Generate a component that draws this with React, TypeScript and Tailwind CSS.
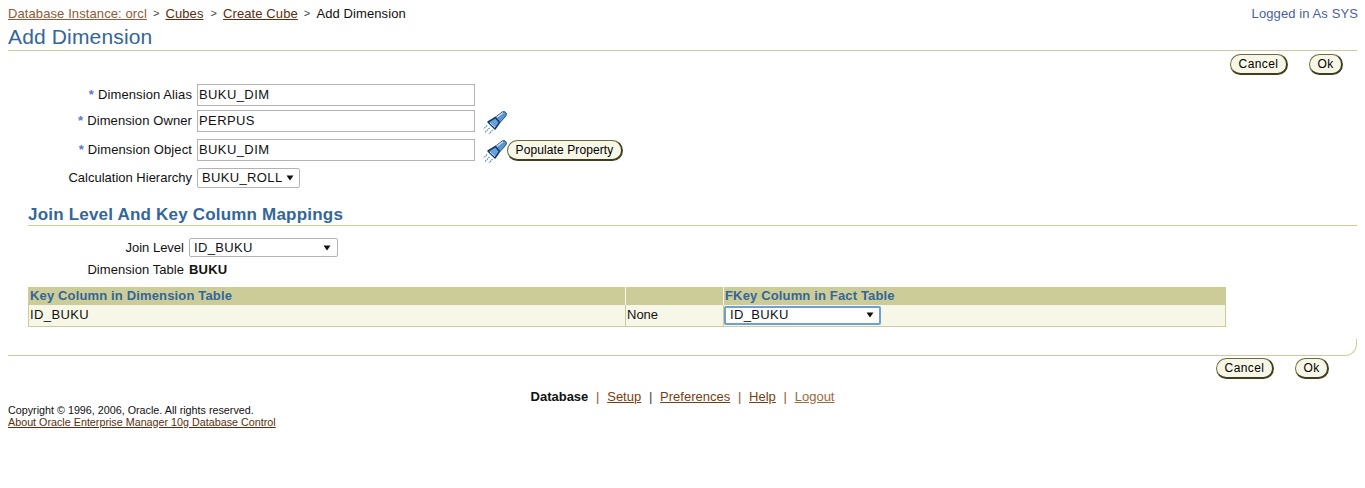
const font = "font-['Liberation_Sans',Arial,sans-serif]";

function Torch() {
  return (
    <svg width="24" height="24" viewBox="0 0 24 24" className="shrink-0">
      <path d="M12 6.5 L19.5 0.8 Q22 0 23.2 2 Q23.8 4 22.5 5.5 L16.5 12 Z" fill="#5a95cc" stroke="#1f4f86" strokeWidth="1" />
      <path d="M13.5 6.5 L20 1.8" stroke="#d2e4f4" strokeWidth="1.4" />
      <path d="M12.5 6.5 L16.5 11.5 L12 18 L5 11 Z" fill="#6aa0d2" stroke="#0f3c78" strokeWidth="1.5" strokeLinejoin="round" />
      <path d="M7 12 L12 16.5" stroke="#cfe2f2" strokeWidth="1" />
      <path d="M4 14.5 L0.5 18 M6.5 17 L2 21.5 M9.5 19 L6 23" stroke="#4a82b8" strokeWidth="1.1" strokeDasharray="1.4 0.9" />
    </svg>
  );
}

function Pill({ label, className = "" }: { label: string; className?: string }) {
  return (
    <button className={`h-[21px] shrink-0 rounded-full border border-[#6b6b3f] border-r-2 border-b-2 border-r-[#3f3f1f] border-b-[#3f3f1f] bg-[#f7f7e7] text-[12px] leading-none text-black ${className}`}>
      {label}
    </button>
  );
}

function Arrow() {
  return (
    <svg width="8" height="6" viewBox="0 0 8 6" className="shrink-0">
      <path d="M0.5 0.5 H7.5 L4 5.5 Z" fill="#111" />
    </svg>
  );
}

function FakeSelect({ value, className }: { value: string; className: string }) {
  return (
    <div className={`flex items-center justify-between rounded-[2px] bg-white text-[13px] tracking-[0.35px] text-[#111] ${className}`}>
      <span>{value}</span>
      <Arrow />
    </div>
  );
}

function Field({ label, value, star, top, icon }: { label: string; value: string; star?: boolean; top: string; icon?: React.ReactNode }) {
  return (
    <div className={`flex h-[22px] items-center ${top}`}>
      <div className="w-[184px] shrink-0 whitespace-nowrap text-right text-[13px] leading-[16px] tracking-[0.1px] text-[#111]">
        {star && <span className="mr-[4px] text-[13px] font-bold text-[#5b78cc]">*</span>}
        {label}
      </div>
      <div className="ml-[5px] flex h-[22px] w-[278px] shrink-0 items-center border border-[#b3b3b3] bg-white pb-[1px] pl-[1px] text-[13px] tracking-[0.4px] text-[#111]">
        {value}
      </div>
      {icon}
    </div>
  );
}

export default function App() {
  return (
    <div className={`${font} h-[488px] w-[1365px] overflow-hidden bg-white px-2 text-[#111]`}>
      {/* breadcrumb */}
      <div className="flex h-[27px] items-center justify-between text-[13px] tracking-[0.1px]">
        <div className="flex items-center gap-[6px]">
          <a className="text-[#8f5a36] underline">Database Instance: orcl</a>
          <span className="text-[11px] text-[#444]">&gt;</span>
          <a className="text-[#5a2e0e] underline">Cubes</a>
          <span className="ml-[1px] text-[11px] text-[#444]">&gt;</span>
          <a className="text-[#5a2e0e] underline">Create Cube</a>
          <span className="text-[11px] text-[#444]">&gt;</span>
          <span>Add Dimension</span>
        </div>
        <span className="-mr-[1px] tracking-[0.1px] text-[#4a5f97]">Logged in As SYS</span>
      </div>

      <h1 className="h-[24px] border-b border-[#cccc99] text-[21px] leading-[20px] tracking-[0.15px] text-[#336699]">Add Dimension</h1>

      <div className="flex h-[33px] items-start justify-end pr-[14px] pt-[3px]">
        <Pill label="Cancel" className="w-[58px] tracking-[0.4px]" />
        <Pill label="Ok" className="ml-[21px] w-[34px] tracking-[0.4px]" />
      </div>

      {/* form */}
      <div>
        <Field star label="Dimension Alias" value="BUKU_DIM" top="" />
        <Field star label="Dimension Owner" value="PERPUS" top="mt-[4px]" icon={<div className="ml-[8px] mt-[3px]"><Torch /></div>} />
        <div className="mt-[7px] flex h-[22px] items-center">
          <Field star label="Dimension Object" value="BUKU_DIM" top="" icon={<div className="ml-[8px] mt-[3px]"><Torch /></div>} />
          <Pill label="Populate Property" className="w-[116px] tracking-[0.1px]" />
        </div>
        <div className="mt-[7px] flex items-center">
          <div className="w-[184px] whitespace-nowrap text-right text-[13px]">Calculation Hierarchy</div>
          <FakeSelect value="BUKU_ROLL" className="ml-[5px] h-[20px] w-[103px] border border-[#b3b3b3] pl-[4px] pr-[5px]" />
        </div>
      </div>

      {/* section */}
      <div className="ml-[20px] mt-[16px]">
        <h2 className="h-[22px] border-b border-[#cccc99] text-[17px] font-bold leading-[21px] tracking-[0.2px] text-[#336699]">
          Join Level And Key Column Mappings
        </h2>
        <div className="mt-[12px] flex items-center">
          <div className="w-[156px] text-right text-[13px]">Join Level</div>
          <FakeSelect value="ID_BUKU" className="ml-[5px] h-[19px] w-[149px] border border-[#b3b3b3] pl-[4px] pr-[6px]" />
        </div>
        <div className="mt-[3px] flex h-[18px] items-center">
          <div className="w-[156px] text-right text-[13px] tracking-[0.05px]">Dimension Table</div>
          <span className="ml-[5px] text-[13px] font-bold tracking-[0.2px]">BUKU</span>
        </div>

        {/* mapping table */}
        <div className="mt-[8px] w-[1198px] border-b border-l border-r border-[#cccc99] text-[13px]">
          <div className="flex h-[18px] items-center bg-[#cccc99] font-bold tracking-[0.15px] text-[#336699]">
            <div className="w-[596px] pl-[1px]">Key Column in Dimension Table</div>
            <div className="h-full w-[98px] border-l border-[#f7f7e7]" />
            <div className="flex h-full items-center border-l border-[#f7f7e7] pl-[1px]">FKey Column in Fact Table</div>
          </div>
          <div className="flex h-[21px] items-center bg-[#f7f7e7]">
            <div className="w-[596px] pl-[1px] tracking-[0.4px]">ID_BUKU</div>
            <div className="flex h-full w-[98px] items-center border-l border-[#cccc99] pl-[1px]">None</div>
            <div className="flex h-full items-center border-l border-[#cccc99]">
              <FakeSelect value="ID_BUKU" className="h-[19px] w-[157px] border-2 border-[#6f9fd8] pl-[4px] pr-[5px]" />
            </div>
          </div>
        </div>
      </div>

      {/* bottom rule + rounded corner */}
      <div className="mt-[12px] flex h-[17px] w-[1349px]">
        <div className="flex-1 border-b border-[#cccc99]" />
        <div className="w-[12px] rounded-br-[12px] border-r border-b border-[#cccc99]" />
      </div>

      <div className="flex h-[26px] items-start justify-end pr-[28px] pt-[2px]">
        <Pill label="Cancel" className="w-[58px] tracking-[0.4px]" />
        <Pill label="Ok" className="ml-[21px] w-[34px] tracking-[0.4px]" />
      </div>

      {/* footer */}
      <div className="mt-[5px] flex justify-center gap-[7.75px] text-[13px] leading-[20px]">
        <span className="font-bold">Database</span>
        <span className="text-[#a0522d]">|</span>
        <a className="text-[#7a3e10] underline">Setup</a>
        <span className="text-[#444]">|</span>
        <a className="text-[#7a3e10] underline">Preferences</a>
        <span className="text-[#a0522d]">|</span>
        <a className="text-[#7a3e10] underline">Help</a>
        <span className="text-[#a0522d]">|</span>
        <a className="text-[#9a6a3c] underline">Logout</a>
      </div>
      <div className="-mt-[3px] text-[10.75px] leading-[12px]">
        <p>Copyright © 1996, 2006, Oracle. All rights reserved.</p>
        <a className="text-[#5a2e0e] underline">About Oracle Enterprise Manager 10g Database Control</a>
      </div>
    </div>
  );
}
